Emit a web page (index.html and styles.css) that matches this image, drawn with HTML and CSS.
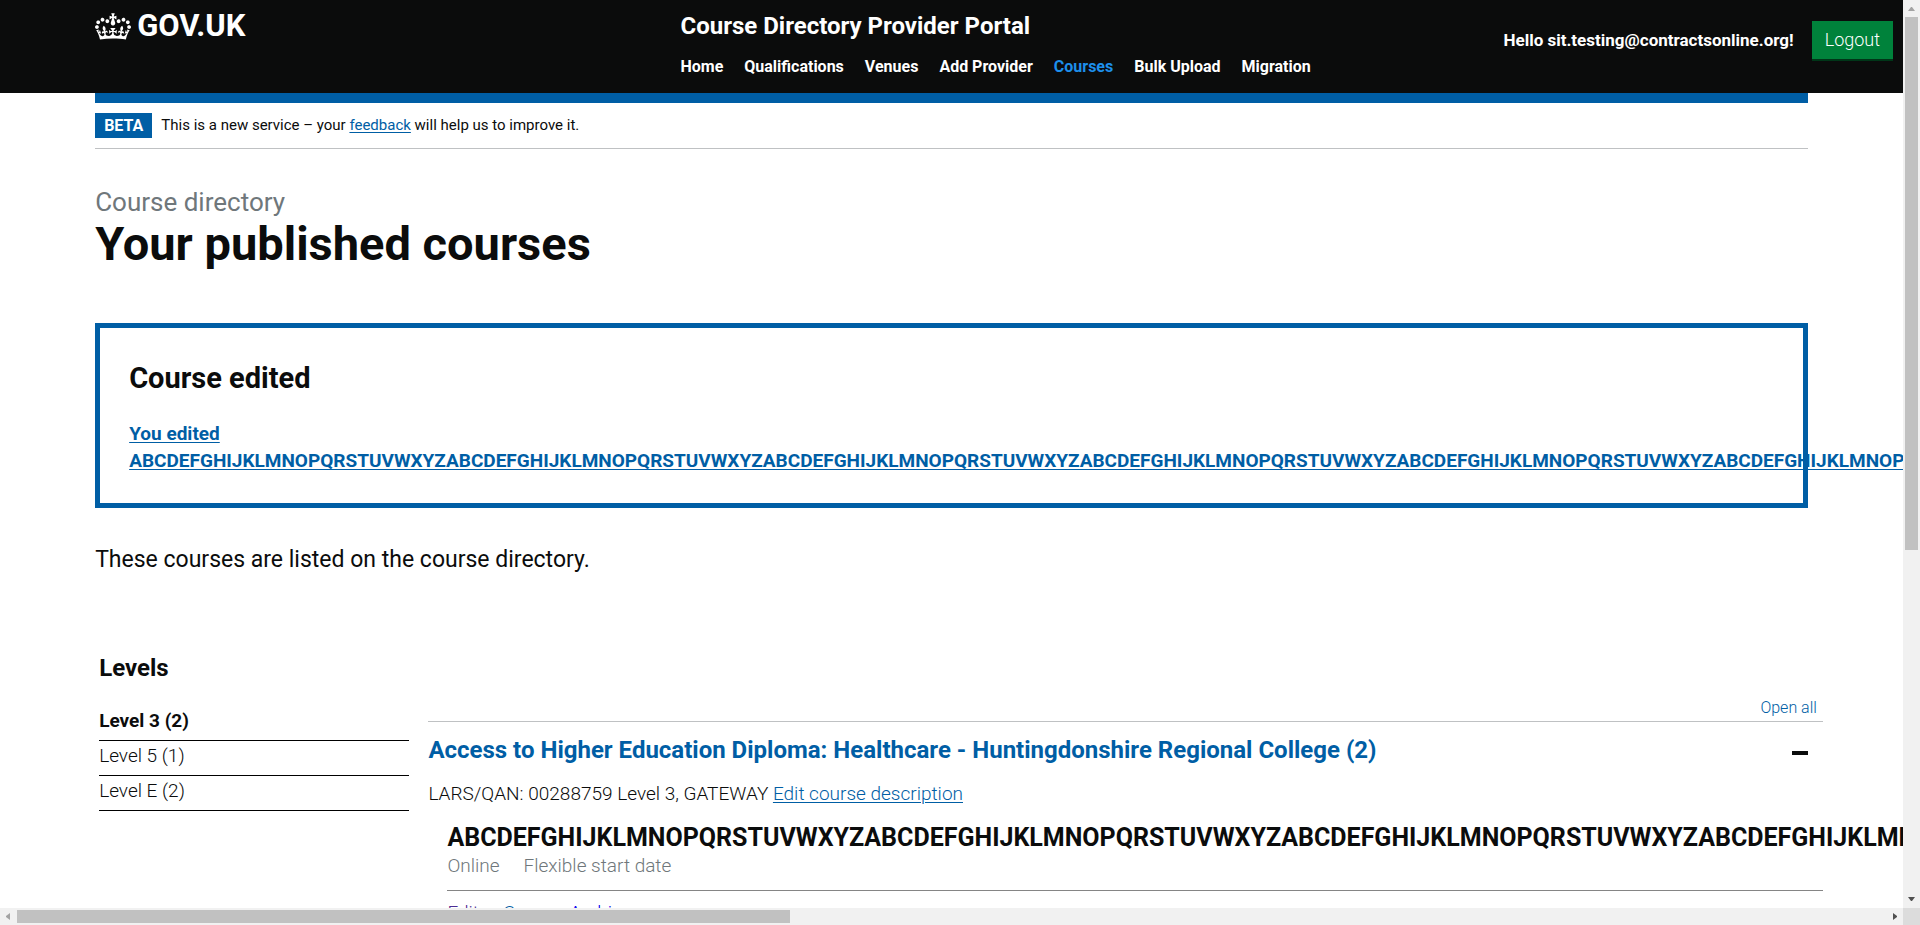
FILE: index.html
```
<!DOCTYPE html>
<html lang="en">
<head>
<meta charset="utf-8">
<meta name="viewport" content="width=device-width, initial-scale=1">
<title>Your published courses</title>
<link rel="stylesheet" href="styles.css">
</head>
<body>
<div class="window">
  <div class="page">
    <header class="header">
      <a class="logo" href="#">
        <svg class="crown" viewBox="0 0 132 97" aria-hidden="true"><path fill="currentColor" fill-rule="evenodd" d="M25 30.2c3.5 1.5 7.7-.2 9.1-3.7 1.5-3.6-.2-7.8-3.9-9.2-3.6-1.4-7.6.3-9.1 3.9-1.4 3.5.3 7.5 3.9 9zM9 39.5c3.6 1.5 7.8-.2 9.2-3.7 1.5-3.6-.2-7.8-3.9-9.1-3.6-1.5-7.6.2-9.1 3.8-1.4 3.5.3 7.5 3.8 9zM4.4 57.2c3.5 1.5 7.7-.2 9.1-3.8 1.5-3.6-.2-7.7-3.9-9.1-3.5-1.5-7.6.3-9.1 3.8-1.4 3.5.3 7.6 3.9 9.1zm38.3-21.4c3.5 1.5 7.7-.2 9.1-3.8 1.5-3.6-.2-7.7-3.9-9.1-3.6-1.5-7.6.3-9.1 3.8-1.3 3.6.4 7.7 3.9 9.1zm64.4-5.6c-3.6 1.5-7.8-.2-9.1-3.7-1.5-3.6.2-7.8 3.8-9.2 3.6-1.4 7.7.3 9.2 3.9 1.3 3.5-.4 7.5-3.9 9zm15.9 9.3c-3.6 1.5-7.7-.2-9.1-3.7-1.5-3.6.2-7.8 3.7-9.1 3.6-1.5 7.7.2 9.2 3.8 1.5 3.5-.3 7.5-3.8 9zm4.7 17.7c-3.6 1.5-7.8-.2-9.2-3.8-1.5-3.6.2-7.7 3.9-9.1 3.6-1.5 7.7.3 9.2 3.8 1.3 3.5-.4 7.6-3.9 9.1zM89.3 35.8c-3.6 1.5-7.8-.2-9.2-3.8-1.4-3.6.2-7.7 3.9-9.1 3.6-1.5 7.7.3 9.2 3.8 1.4 3.6-.3 7.7-3.9 9.1zM69.7 17.7l8.9 4.7V9.3l-8.9 2.8c-.2-.3-.5-.6-.9-.9L72.4 0H59.6l3.5 11.2c-.3.3-.6.5-.9.9l-8.8-2.8v13.1l8.8-4.7c.3.3.6.7.9.9l-5 15.4v.1c-.2.8-.4 1.6-.4 2.4 0 4.1 3.1 7.5 7 8.1h.2c.3 0 .7.1 1 .1.4 0 .7 0 1-.1h.2c4-.6 7.1-4.1 7.1-8.1 0-.8-.1-1.7-.4-2.4V34l-5.1-15.4c.4-.2.7-.6 1-.9zM66 92.8c16.9 0 32.8 1.1 47.1 3.2 4-16.9 8.9-26.7 14-33.5l-9.6-3.4c1 4.9 1.1 7.2 0 10.2-1.5-1.4-3-4.3-4.2-8.7L108.6 76c2.8-2 5-3.2 7.5-3.3-4.4 9.4-10 11.9-13.6 11.2-4.3-.8-6.3-4.6-5.6-7.9 1-4.7 5.7-5.9 8-.5 4.3-8.7-3-11.4-7.6-8.8 7.1-7.2 7.9-13.5 2.1-21.1-8 6.1-8.1 12.3-4.5 20.8-4.7-5.4-12.1-2.5-9.5 6.2 3.4-5.2 7.9-2 7.2 3.1-.6 4.3-6.4 7.8-13.5 7.2-10.3-.9-10.9-8-11.2-13.8 2.5-.5 7.1 1.8 11 7.3L80.2 60c-4.1 4.4-8 5.3-12.3 5.4 1.4-4.4 8-11.6 8-11.6H55.5s6.4 7.2 7.9 11.6c-4.2-.1-8-1-12.3-5.4l1.4 16.4c3.9-5.5 8.5-7.7 10.9-7.3-.3 5.8-.9 12.8-11.1 13.8-7.2.6-12.9-2.9-13.5-7.2-.7-5 3.8-8.3 7.1-3.1 2.7-8.7-4.6-11.6-9.4-6.2 3.7-8.5 3.6-14.7-4.6-20.8-5.8 7.6-5 13.9 2.2 21.1-4.7-2.6-11.9.1-7.7 8.8 2.3-5.5 7.1-4.2 8.1.5.7 3.3-1.3 7.1-5.7 7.9-3.5.7-9-1.8-13.5-11.2 2.5.1 4.7 1.3 7.5 3.3l-4.7-15.4c-1.2 4.4-2.7 7.2-4.3 8.7-1.1-3-.9-5.3 0-10.2l-9.5 3.4c5 6.9 9.9 16.7 14 33.5 14.8-2.1 30.8-3.2 47.7-3.2z"/></svg>
        <span>GOV.UK</span>
      </a>
      <div class="service">
        <a class="service-name" href="#">Course Directory Provider Portal</a>
        <nav class="nav" aria-label="Main">
          <a href="#">Home</a>
          <a href="#">Qualifications</a>
          <a href="#">Venues</a>
          <a href="#">Add Provider</a>
          <a class="current" href="#" aria-current="page">Courses</a>
          <a href="#">Bulk Upload</a>
          <a href="#">Migration</a>
        </nav>
      </div>
      <div class="user">
        <span class="greeting">Hello sit.testing@contractsonline.org!</span>
        <button class="logout" type="button">Logout</button>
      </div>
    </header>

    <main class="container">
      <div class="beta">
        <strong class="tag">BETA</strong>
        <span>This is a new service – your <a href="#">feedback</a> will help us to improve it.</span>
      </div>

      <p class="caption">Course directory</p>
      <h1 class="title">Your published courses</h1>

      <section class="notice">
        <h2 class="notice-title">Course edited</h2>
        <a class="notice-link" href="#">You edited ABCDEFGHIJKLMNOPQRSTUVWXYZABCDEFGHIJKLMNOPQRSTUVWXYZABCDEFGHIJKLMNOPQRSTUVWXYZABCDEFGHIJKLMNOPQRSTUVWXYZABCDEFGHIJKLMNOPQRSTUVWXYZABCDEFGHIJKLMNOPQRSTUVWXYZ</a>
      </section>

      <p class="intro">These courses are listed on the course directory.</p>

      <div class="columns">
        <aside>
          <h2 class="levels-title">Levels</h2>
          <ul class="levels">
            <li><a class="selected" href="#">Level 3 (2)</a></li>
            <li><a href="#">Level 5 (1)</a></li>
            <li><a href="#">Level E (2)</a></li>
          </ul>
        </aside>
        <section class="courses">
          <div class="controls"><button class="open-all" type="button">Open all</button></div>
          <h2 class="course-heading">
            <button class="toggle" type="button" aria-expanded="true">
              <span>Access to Higher Education Diploma: Healthcare - Huntingdonshire Regional College (2)</span>
              <span class="minus"></span>
            </button>
          </h2>
          <p class="course-info">LARS/QAN: 00288759 Level 3, GATEWAY <a href="#">Edit course description</a></p>
          <article class="run">
            <h3 class="run-title">ABCDEFGHIJKLMNOPQRSTUVWXYZABCDEFGHIJKLMNOPQRSTUVWXYZABCDEFGHIJKLMNOPQRSTUVWXYZABCDEFGHIJKLMNOPQRSTUVWXYZ</h3>
            <p class="run-meta"><span>Online</span><span>Flexible start date</span></p>
            <div class="run-actions">
              <a class="visited" href="#">Edit</a>
              <a href="#">Copy</a>
              <a class="plain" href="#">Archive</a>
            </div>
          </article>
        </section>
      </div>
    </main>
  </div>

  <div class="bar bar-v" aria-hidden="true">
    <svg class="arrow faint" viewBox="0 0 17 17"><path d="M5 11h7L9 7H8z"/></svg>
    <div class="track"><div class="thumb"></div></div>
    <svg class="arrow" viewBox="0 0 17 17"><path d="M5 6h7L9 10H8z"/></svg>
  </div>
  <div class="bar bar-h" aria-hidden="true">
    <svg class="arrow faint" viewBox="0 0 17 17"><path d="M10 5v7L6 9V8z"/></svg>
    <div class="track"><div class="thumb"></div></div>
    <svg class="arrow" viewBox="0 0 17 17"><path d="M7 5v7L11 9V8z"/></svg>
  </div>
  <div class="corner"></div>
</div>
</body>
</html>
```

FILE: styles.css
```
* { box-sizing: border-box; }

body, h1, h2, h3, p, ul { margin: 0; padding: 0; }

body {
  font-family: Roboto, "Liberation Sans", sans-serif;
  font-size: 19px;
  font-weight: 300;
  line-height: 24px;
  color: #0b0c0c;
  background: #fff;
}

a { color: #005ea5; text-underline-offset: 2px; }

button {
  font: inherit;
  color: inherit;
  background: none;
  border: 0;
  padding: 0;
  cursor: pointer;
}

.window {
  display: grid;
  grid-template: minmax(0, 1fr) 17px / minmax(0, 1fr) 17px;
  height: 100vh;
}

.page { overflow: hidden; }

/* Header */
.header {
  display: grid;
  grid-template-columns: 32% 1fr auto;
  align-items: start;
  padding: 12px 10px 16px 5%;
  color: #fff;
  background: #0b0c0c;
}

.header a { color: inherit; text-decoration: none; }

.logo {
  display: flex;
  align-items: center;
  gap: 6px;
  font-size: 31px;
  font-weight: 700;
  line-height: 28px;
}

.crown { width: 36px; height: 27px; }

.service { padding-left: 10px; }

.service-name {
  display: block;
  font-size: 24px;
  font-weight: 700;
  line-height: 28px;
}

.nav {
  display: flex;
  gap: 21px;
  margin-top: 17px;
  font-size: 16px;
  font-weight: 700;
  line-height: 20px;
}

.header .current { color: #1d8feb; }

.user {
  display: flex;
  align-items: center;
  gap: 18px;
  padding-top: 9px;
}

.greeting {
  font-size: 17px;
  font-weight: 700;
}

.logout {
  height: 38px;
  padding: 0 13px;
  font-size: 18px;
  color: #fff;
  background: #00823b;
  box-shadow: 0 2px 0 #003618;
}

/* Main content */
.container { margin: 0 5%; }

.beta {
  display: flex;
  align-items: center;
  gap: 9px;
  padding: 10px 0;
  border-top: 10px solid #005ea5;
  border-bottom: 1px solid #bfc1c3;
  font-size: 15px;
  font-weight: 400;
  line-height: 25px;
}

.tag {
  padding: 0 9px;
  font-size: 16px;
  font-weight: 700;
  color: #fff;
  background: #005ea5;
}

.caption {
  margin-top: 38px;
  font-size: 26px;
  font-weight: 400;
  line-height: 30px;
  color: #6f777b;
}

.title {
  margin-top: 2px;
  font-size: 47px;
  font-weight: 700;
  line-height: 50px;
}

.notice {
  margin-top: 54px;
  padding: 30px 29px 29px;
  border: 5px solid #005ea5;
}

.notice-title {
  font-size: 29px;
  font-weight: 700;
  line-height: 40px;
}

.notice-link {
  display: block;
  margin-top: 22px;
  font-weight: 700;
  line-height: 27px;
}

.intro {
  margin-top: 37px;
  font-size: 23px;
  font-weight: 400;
  line-height: 30px;
}

/* Levels and course list */
.columns {
  display: grid;
  grid-template-columns: 18% minmax(0, 1fr);
  gap: 19px;
  margin: 78px -15px 0 4px;
}

.levels-title {
  font-size: 24px;
  font-weight: 700;
  line-height: 30px;
}

.levels {
  margin-top: 23px;
  list-style: none;
}

.levels li {
  padding: 3px 0 7px;
  border-bottom: 1px solid #000;
}

.levels a {
  display: block;
  color: #0b0c0c;
  text-decoration: none;
}

.levels .selected { font-weight: 700; }

.controls {
  display: flex;
  justify-content: flex-end;
  padding: 45px 6px 3px 0;
  border-bottom: 1px solid #bfc1c3;
}

.open-all {
  font-size: 16px;
  line-height: 20px;
  color: #005ea5;
}

.course-heading {
  padding-top: 13px;
  font-size: 24px;
  font-weight: 700;
  line-height: 30px;
}

.toggle {
  display: flex;
  align-items: center;
  justify-content: space-between;
  width: 100%;
  padding-right: 15px;
  text-align: left;
  color: #005ea5;
}

.minus {
  width: 16px;
  height: 4px;
  margin-top: 6px;
  background: #0b0c0c;
}

.course-info { margin-top: 17px; }

.run { margin: 17px 0 0 19px; }

.run-title {
  font-size: 25px;
  font-weight: 700;
  line-height: 30px;
}

.run-meta {
  display: flex;
  gap: 24px;
  margin-top: 1px;
  padding-bottom: 12px;
  color: #6f777b;
  border-bottom: 1px solid #858585;
}

.run-actions {
  display: flex;
  gap: 24px;
  padding-top: 10px;
}

.run-actions .visited { color: #4c2c92; }

.run-actions .plain { color: #00e; }

/* Scroll bars */
.bar { display: flex; background: #f1f1f1; }

.bar-v { flex-direction: column; }

.track { flex: 1; }

.thumb { background: #c1c1c1; }

.bar-v .thumb { width: 13px; height: 61%; margin: 0 2px; }

.bar-h .thumb { width: calc(100% * 12 / 29); height: 13px; margin: 2px 0; }

.arrow { flex: none; width: 17px; height: 17px; fill: #505050; }

.faint { fill: #a3a3a3; }

.corner { background: #dcdcdc; }
```
